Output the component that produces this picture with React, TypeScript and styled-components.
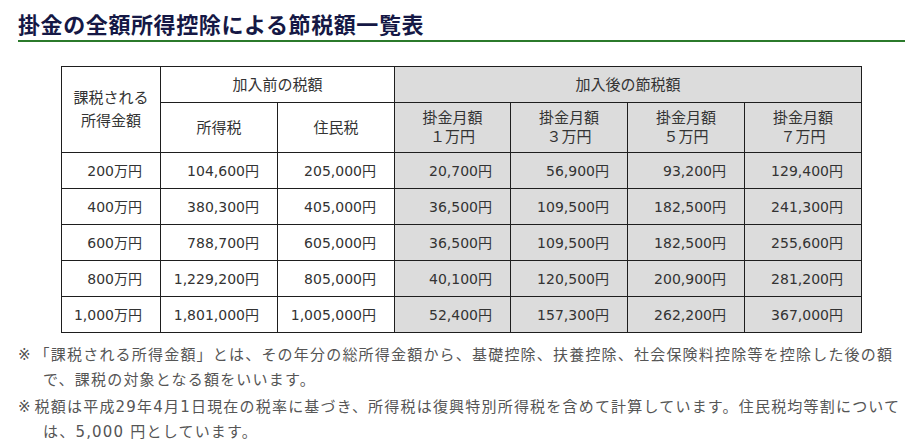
import React from "react";
import styled, { createGlobalStyle } from "styled-components";

const GlobalStyle = createGlobalStyle`
  html, body { margin: 0; padding: 0; background: #ffffff; }
  body {
    font-family: "DejaVu Sans", "Noto Sans CJK JP", sans-serif;
    color: #333333;
  }
`;

const Page = styled.div`
  width: 887px;
  padding-left: 18px;
  box-sizing: content-box;
`;

const Title = styled.h2`
  margin: 8px 0 0 0;
  padding: 0 0 2px 0;
  font-family: "Noto Sans CJK JP", sans-serif;
  font-size: 22px;
  letter-spacing: 0.6px;
  line-height: 30px;
  font-weight: 700;
  color: #151845;
  border-bottom: 2px solid #2b7a2b;
`;

const Table = styled.table`
  margin: 24px auto 0 auto;
  border-collapse: collapse;
  table-layout: fixed;
  width: 800px;
  font-size: 14px;
  color: #333333;
`;

const Col = styled.col<{ $w: number }>`
  width: ${(p) => p.$w}px;
`;

const HeadRow = styled.tr<{ $h: number }>`
  height: ${(p) => p.$h}px;
`;

const BodyRow = styled.tr`
  height: 36px;
`;

const HeadCell = styled.th<{ $shade?: boolean; $lh?: number }>`
  border: 1px solid #1e1e1e;
  padding: 0 4px;
  font-weight: 400;
  font-size: 15px;
  text-align: center;
  vertical-align: middle;
  line-height: ${(p) => p.$lh ?? 20}px;
  background: ${(p) => (p.$shade ? "#dcdcdc" : "#ffffff")};
`;

const Cell = styled.td<{ $shade?: boolean }>`
  border: 1px solid #1e1e1e;
  padding: 0 18px 0 4px;
  text-align: right;
  vertical-align: middle;
  line-height: 20px;
  white-space: nowrap;
  background: ${(p) => (p.$shade ? "#dcdcdc" : "#ffffff")};
`;

const Notes = styled.div`
  margin-top: 10px;
  display: flex;
  flex-direction: column;
  gap: 2px;
`;

const Note = styled.p`
  margin: 0;
  padding-left: 25px;
  text-indent: -25px;
  font-size: 15px;
  letter-spacing: 1.2px;
  line-height: 25px;
  white-space: nowrap;
  color: #555555;
`;

const Mark = styled.span`
  letter-spacing: 0;
  margin-right: 4px;
`;

const rows: string[][] = [
  ["200万円", "104,600円", "205,000円", "20,700円", "56,900円", "93,200円", "129,400円"],
  ["400万円", "380,300円", "405,000円", "36,500円", "109,500円", "182,500円", "241,300円"],
  ["600万円", "788,700円", "605,000円", "36,500円", "109,500円", "182,500円", "255,600円"],
  ["800万円", "1,229,200円", "805,000円", "40,100円", "120,500円", "200,900円", "281,200円"],
  ["1,000万円", "1,801,000円", "1,005,000円", "52,400円", "157,300円", "262,200円", "367,000円"],
];

const widths = [99, 117, 117, 116, 117, 117, 117];
const monthly = ["１万円", "３万円", "５万円", "７万円"];

export default function App() {
  return (
    <>
      <GlobalStyle />
      <Page>
        <Title>掛金の全額所得控除による節税額一覧表</Title>
        <Table>
          <colgroup>
            {widths.map((w, i) => (
              <Col key={i} $w={w} />
            ))}
          </colgroup>
          <thead>
            <HeadRow $h={36}>
              <HeadCell rowSpan={2} $lh={23}>
                課税される
                <br />
                所得金額
              </HeadCell>
              <HeadCell colSpan={2}>加入前の税額</HeadCell>
              <HeadCell colSpan={4} $shade>
                加入後の節税額
              </HeadCell>
            </HeadRow>
            <HeadRow $h={50}>
              <HeadCell>所得税</HeadCell>
              <HeadCell>住民税</HeadCell>
              {monthly.map((m) => (
                <HeadCell key={m} $shade $lh={19}>
                  掛金月額
                  <br />
                  {m}
                </HeadCell>
              ))}
            </HeadRow>
          </thead>
          <tbody>
            {rows.map((r) => (
              <BodyRow key={r[0]}>
                {r.map((v, i) => (
                  <Cell key={i} $shade={i >= 3}>
                    {v}
                  </Cell>
                ))}
              </BodyRow>
            ))}
          </tbody>
        </Table>
        <Notes>
          <Note>
            <Mark>※</Mark>「課税される所得金額」とは、その年分の総所得金額から、基礎控除、扶養控除、社会保険料控除等を控除した後の額
            <br />
            で、課税の対象となる額をいいます。
          </Note>
          <Note>
            <Mark>※</Mark>税額は平成29年4月1日現在の税率に基づき、所得税は復興特別所得税を含めて計算しています。住民税均等割について
            <br />
            は、5,000 円としています。
          </Note>
        </Notes>
      </Page>
    </>
  );
}
